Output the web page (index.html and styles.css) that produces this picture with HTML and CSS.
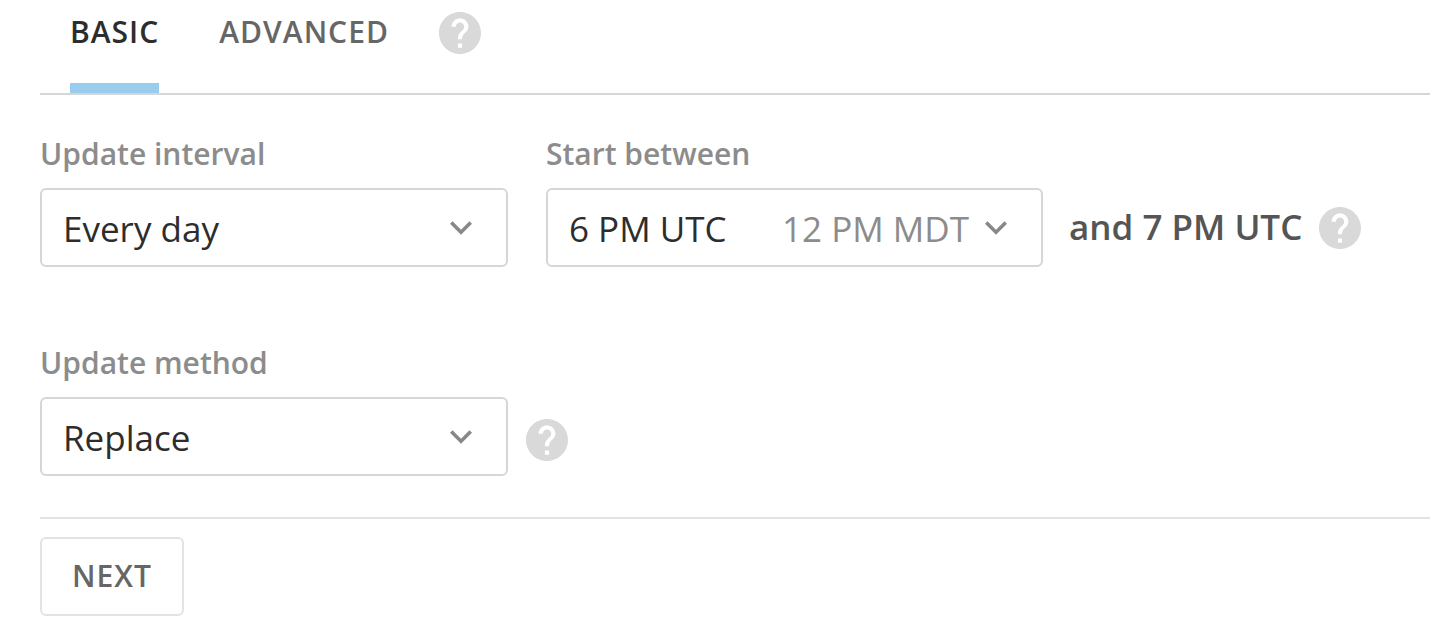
FILE: index.html
```html
<!DOCTYPE html>
<html lang="en">
<head>
<meta charset="utf-8">
<meta name="viewport" content="width=device-width, initial-scale=1">
<title>Update schedule</title>
<link rel="stylesheet" href="styles.css">
</head>
<body>
<svg class="symbols" aria-hidden="true">
  <symbol id="help" viewBox="2 2 20 20"><path d="M12 2C6.48 2 2 6.48 2 12s4.48 10 10 10 10-4.48 10-10S17.52 2 12 2zm1 17h-2v-2h2v2zm2.07-7.75l-.9.92C13.45 12.9 13 13.5 13 15h-2v-.5c0-1.1.45-2.1 1.17-2.83l1.24-1.26c.37-.36.59-.86.59-1.41 0-1.1-.9-2-2-2s-2 .9-2 2H8c0-2.21 1.79-4 4-4s4 1.79 4 4c0 .88-.36 1.68-.93 2.25z"/></symbol>
  <symbol id="chevron" viewBox="6 8 12 8"><path d="M16.59 8.59L12 13.17 7.41 8.59 6 10l6 6 6-6z"/></symbol>
</svg>
<form class="schedule">
  <header class="tabbar">
    <div class="tabs" role="tablist">
      <button class="tab tab-active" type="button" role="tab" aria-selected="true">BASIC</button>
      <button class="tab" type="button" role="tab" aria-selected="false">ADVANCED</button>
    </div>
    <button class="help" type="button" aria-label="Help with schedule modes"><svg class="help-icon"><use href="#help"/></svg></button>
  </header>

  <div class="fields">
    <div class="row">
      <div class="field">
        <label class="label" for="interval">Update interval</label>
        <div class="control">
          <select class="select" id="interval"><option>Every day</option></select>
          <svg class="chevron" aria-hidden="true"><use href="#chevron"/></svg>
        </div>
      </div>
      <div class="field field-wide">
        <label class="label" for="start">Start between</label>
        <div class="control">
          <select class="select" id="start" aria-describedby="local-time"><option>6 PM UTC</option></select>
          <span class="local-time" id="local-time">12 PM MDT</span>
          <svg class="chevron" aria-hidden="true"><use href="#chevron"/></svg>
        </div>
      </div>
      <div class="after">
        <span class="range-end">and 7 PM UTC</span>
        <button class="help" type="button" aria-label="Help with start time"><svg class="help-icon"><use href="#help"/></svg></button>
      </div>
    </div>
    <div class="row">
      <div class="field">
        <label class="label" for="method">Update method</label>
        <div class="control">
          <select class="select" id="method"><option>Replace</option></select>
          <svg class="chevron" aria-hidden="true"><use href="#chevron"/></svg>
        </div>
      </div>
      <div class="after after-near">
        <button class="help" type="button" aria-label="Help with update method"><svg class="help-icon"><use href="#help"/></svg></button>
      </div>
    </div>
  </div>

  <footer class="actions">
    <button class="next" type="button">NEXT</button>
  </footer>
</form>
</body>
</html>
```

FILE: styles.css
```css
* {
  box-sizing: border-box;
}

body {
  margin: 0;
  background: #fff;
  color: #2d2d2d;
  font-family: "Open Sans", "Noto Sans", sans-serif;
}

button,
select {
  margin: 0;
  font-family: inherit;
}

.symbols {
  display: none;
}

.schedule {
  padding-left: 40px;
}

.tabbar {
  display: flex;
  gap: 50px;
  padding-left: 30px;
  border-bottom: 2px solid #d6d6d6;
}

.tabs {
  display: flex;
  gap: 60px;
}

.tab {
  padding: 11px 0 30px;
  border: 0;
  border-bottom: 10px solid transparent;
  background: none;
  color: #666;
  font-size: 30px;
  font-weight: 600;
  line-height: 42px;
  letter-spacing: 1px;
}

.tab-active {
  border-bottom-color: #99cdef;
  color: #2d2d2d;
}

.help {
  display: flex;
  padding: 0;
  border: 0;
  background: none;
}

.tabbar .help {
  align-self: flex-start;
  margin-top: 12px;
}

.help-icon {
  width: 42px;
  height: 42px;
  fill: #d9d9d9;
}

.fields {
  display: grid;
  gap: 76px;
  padding: 39px 0 41px;
}

.row {
  display: flex;
  align-items: flex-end;
}

.field {
  flex: 0 1 468px;
}

.field-wide {
  flex-basis: 497px;
  margin-left: 38px;
}

.label {
  display: block;
  margin-bottom: 14px;
  color: #8c8c8c;
  font-size: 30px;
  font-weight: 600;
  line-height: 40px;
}

.control {
  display: grid;
  align-items: center;
}

.control > * {
  grid-area: 1 / 1;
}

.select {
  width: 100%;
  height: 79px;
  padding: 2px 70px 0 21px;
  border: 2px solid #d6d6d6;
  border-radius: 6px;
  appearance: none;
  background: #fff;
  color: #2d2d2d;
  font-size: 35px;
}

.local-time {
  justify-self: end;
  padding-top: 2px;
  margin-right: 74px;
  color: #8c8c8c;
  font-size: 35px;
  pointer-events: none;
}

.chevron {
  justify-self: end;
  width: 22px;
  height: 15px;
  margin-right: 36px;
  fill: #888;
  pointer-events: none;
}

.after {
  display: flex;
  align-items: center;
  gap: 17px;
  height: 79px;
  margin-left: 26px;
}

.after-near {
  padding-top: 6px;
  margin-left: 18px;
}

.range-end {
  padding-bottom: 2px;
  color: #555;
  font-size: 35px;
  font-weight: 600;
  white-space: nowrap;
}

.actions {
  padding: 18px 0 28px;
  border-top: 2px solid #e3e3e3;
}

.next {
  height: 79px;
  padding: 0 30px 3px;
  border: 2px solid #e3e3e3;
  border-radius: 6px;
  background: #fff;
  color: #666;
  font-size: 30px;
  font-weight: 600;
  letter-spacing: 1px;
}
```
